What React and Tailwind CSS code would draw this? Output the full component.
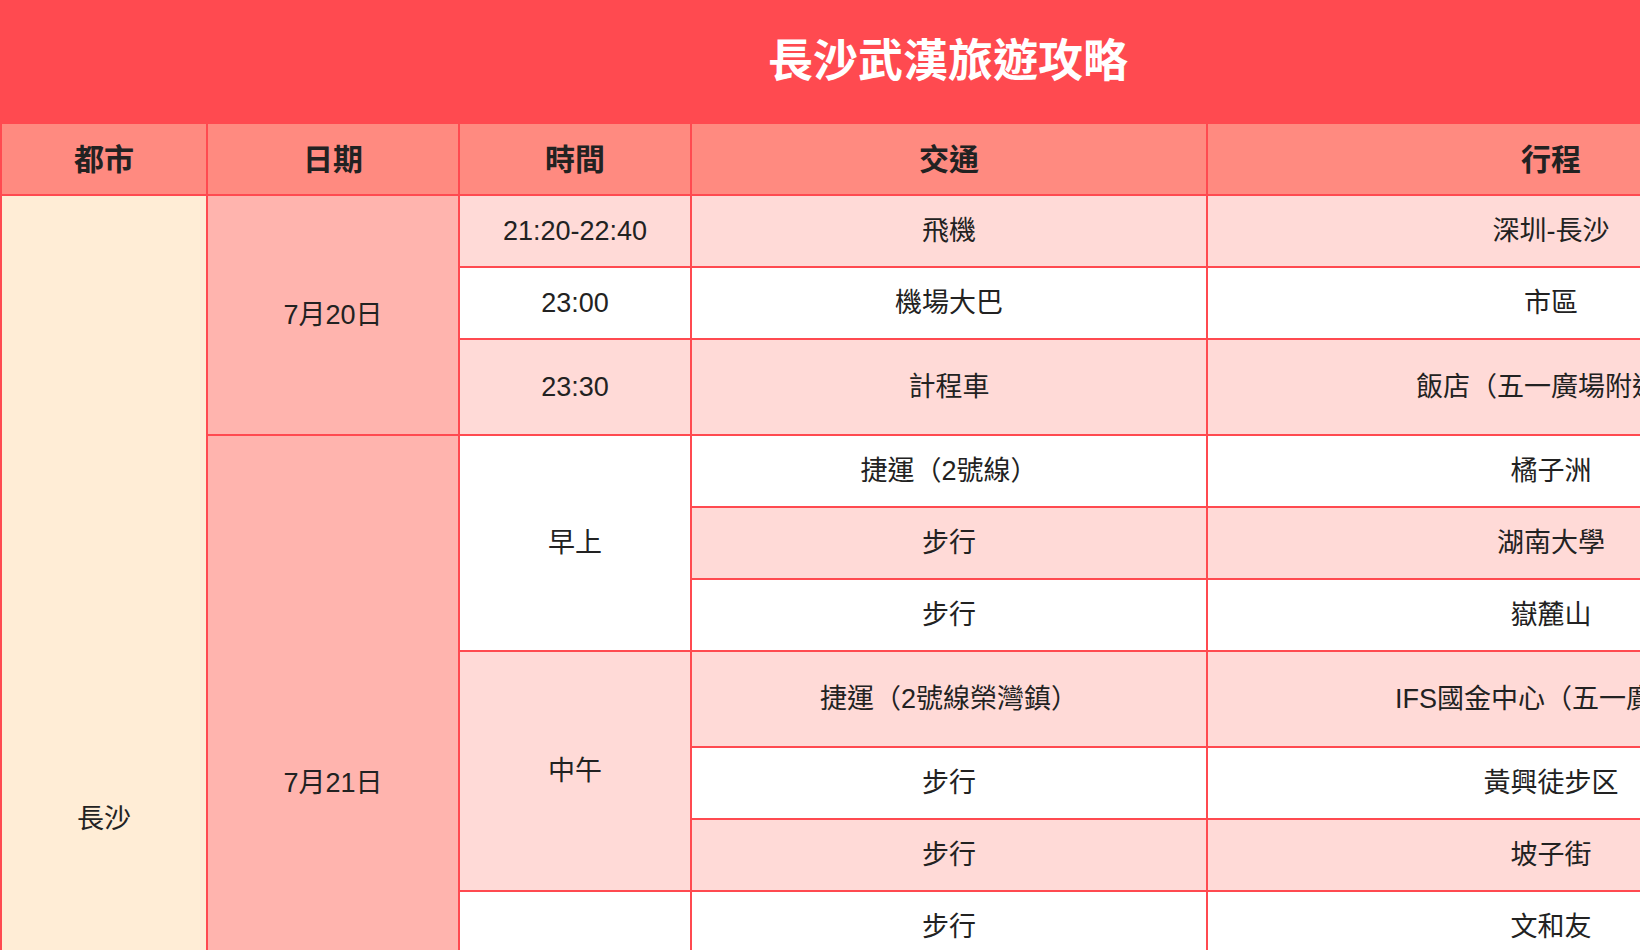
const font = {
  fontFamily: '"Liberation Sans", "Noto Sans CJK TC", sans-serif',
};

// date: [label, rowSpan] starts a date cell on that row
const rows = [
  { date: ["7月20日", 3], time: "21:20-22:40", timeSpan: 1, ride: "飛機", plan: "深圳-長沙" },
  { time: "23:00", timeSpan: 1, ride: "機場大巴", plan: "市區" },
  { time: "23:30", timeSpan: 1, ride: "計程車", plan: "飯店（五一廣場附近）", tall: true },
  { date: ["7月21日", 9], time: "早上", timeSpan: 3, ride: "捷運（2號線）", plan: "橘子洲" },
  { ride: "步行", plan: "湖南大學" },
  { ride: "步行", plan: "嶽麓山" },
  { time: "中午", timeSpan: 3, ride: "捷運（2號線榮灣鎮）", plan: "IFS國金中心（五一廣場）", tall: true },
  { ride: "步行", plan: "黃興徒步区" },
  { ride: "步行", plan: "坡子街" },
  { time: "晚上", timeSpan: 3, ride: "步行", plan: "文和友" },
  { ride: "步行", plan: "杜甫江閣" },
  { ride: "計程車", plan: "飯店（五一廣場附近）", tall: true },
  { date: ["7月22日", 4], time: "早上", timeSpan: 4, ride: "步行", plan: "天心閣" },
  { ride: "步行", plan: "湖南省博物館" },
  { ride: "捷運（1號線）", plan: "長沙南站", tall: true },
  { ride: "高鐵", plan: "長沙-武漢" },
];

const cell = "border-2 border-[#ff4a50] text-center align-middle";

export default function App() {
  return (
    <div className="h-[950px] w-[1640px] overflow-hidden bg-white text-[#222]" style={font}>
      <table className="w-[1894px] table-fixed border-collapse">
        <colgroup>
          <col className="w-[206px]" />
          <col className="w-[252px]" />
          <col className="w-[232px]" />
          <col className="w-[516px]" />
          <col className="w-[688px]" />
        </colgroup>
        <thead>
          <tr>
            <th
              colSpan={5}
              className="h-[122px] border-2 border-[#ff4a50] bg-[#ff4a50] text-center text-[45px] font-bold text-white"
            >
              長沙武漢旅遊攻略
            </th>
          </tr>
          <tr className="bg-[#ff8a80]">
            {["都市", "日期", "時間", "交通", "行程"].map((h) => (
              <th key={h} className={`${cell} h-[72px] text-[30px] font-bold`}>
                {h}
              </th>
            ))}
          </tr>
        </thead>
        <tbody className="text-[27px]">
          {rows.map((r, i) => {
            const bg = i % 2 === 0 ? "bg-[#ffdad7]" : "bg-white";
            const h = r.tall ? "h-[96px]" : "h-[72px]";
            return (
              <tr key={i} className={bg}>
                {i === 0 && (
                  <td rowSpan={rows.length} className={`${cell} bg-[#ffedd6]`}>
                    長沙
                  </td>
                )}
                {r.date && (
                  <td rowSpan={r.date[1]} className={`${cell} bg-[#ffb4ae]`}>
                    {r.date[0]}
                  </td>
                )}
                {r.timeSpan && (
                  <td rowSpan={r.timeSpan} className={cell}>
                    {r.time}
                  </td>
                )}
                <td className={`${cell} ${h}`}>{r.ride}</td>
                <td className={`${cell} ${h}`}>{r.plan}</td>
              </tr>
            );
          })}
        </tbody>
      </table>
    </div>
  );
}
